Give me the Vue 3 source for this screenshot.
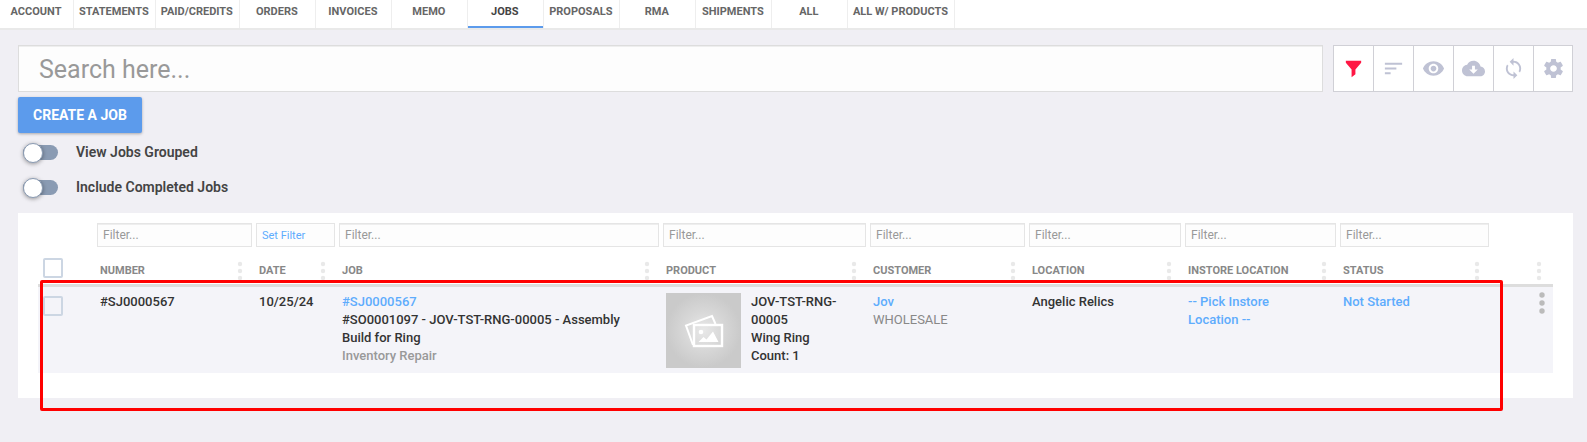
<!-- App.vue -->
<script setup>
import { ref } from 'vue';

const tabs = [
    'Account', 'Statements', 'Paid/Credits', 'Orders', 'Invoices', 'Memo',
    'Jobs', 'Proposals', 'RMA', 'Shipments', 'All', 'All w/ Products'
];
const activeTab = ref('Jobs');

const tools = [
    { name: 'Filter', path: 'M4 4h16v2l-6 7v5l-4 3v-8L4 6z' },
    { name: 'Sort', path: 'M3 18h6v-2H3v2zM3 6v2h18V6H3zm0 7h12v-2H3v2z' },
    { name: 'Visibility', path: 'M12 4.5C7 4.5 2.73 7.61 1 12c1.73 4.39 6 7.5 11 7.5s9.27-3.11 11-7.5c-1.73-4.39-6-7.5-11-7.5zM12 17c-2.76 0-5-2.24-5-5s2.24-5 5-5 5 2.24 5 5-2.24 5-5 5zm0-8c-1.66 0-3 1.34-3 3s1.34 3 3 3 3-1.34 3-3-1.34-3-3-3z' },
    { name: 'Download', path: 'M19.35 10.04C18.67 6.59 15.64 4 12 4 9.11 4 6.6 5.64 5.35 8.04 2.34 8.36 0 10.91 0 14c0 3.31 2.69 6 6 6h13c2.76 0 5-2.24 5-5 0-2.64-2.05-4.78-4.65-4.96zM16.5 13L12 17.5 7.5 13h3V9h3v4h3z' },
    { name: 'Refresh', path: 'M12 4V1L8 5l4 4V6c3.31 0 6 2.69 6 6 0 1.01-.25 1.97-.7 2.8l1.46 1.46C19.54 15.03 20 13.57 20 12c0-4.42-3.58-8-8-8zm0 14c-3.31 0-6-2.69-6-6 0-1.01.25-1.97.7-2.8L5.24 7.74C4.46 8.97 4 10.43 4 12c0 4.42 3.58 8 8 8v3l4-4-4-4v3z' },
    { name: 'Settings', path: 'M19.43 12.98c.04-.32.07-.64.07-.98s-.03-.66-.07-.98l2.11-1.65c.19-.15.24-.42.12-.64l-2-3.46c-.12-.22-.39-.3-.61-.22l-2.49 1c-.52-.4-1.08-.73-1.69-.98l-.38-2.65C14.46 2.18 14.25 2 14 2h-4c-.25 0-.46.18-.49.42l-.38 2.65c-.61.25-1.17.59-1.69.98l-2.49-1c-.23-.09-.49 0-.61.22l-2 3.46c-.13.22-.07.49.12.64l2.11 1.65c-.04.32-.07.65-.07.98s.03.66.07.98l-2.11 1.65c-.19.15-.24.42-.12.64l2 3.46c.12.22.39.3.61.22l2.49-1c.52.4 1.08.73 1.69.98l.38 2.65c.03.24.24.42.49.42h4c.25 0 .46-.18.49-.42l.38-2.65c.61-.25 1.17-.59 1.69-.98l2.49 1c.23.09.49 0 .61-.22l2-3.46c.12-.22.07-.49-.12-.64l-2.11-1.65zM12 15.5c-1.93 0-3.5-1.57-3.5-3.5s1.57-3.5 3.5-3.5 3.5 1.57 3.5 3.5-1.57 3.5-3.5 3.5z' }
];

const columns = [
    { key: 'number', label: 'Number' },
    { key: 'date', label: 'Date' },
    { key: 'job', label: 'Job' },
    { key: 'product', label: 'Product' },
    { key: 'customer', label: 'Customer' },
    { key: 'location', label: 'Location' },
    { key: 'instore', label: 'Instore Location' },
    { key: 'status', label: 'Status' }
];

const search = ref('');
const grouped = ref(false);
const completed = ref(false);
const filters = ref({});
const allSelected = ref(false);

const jobs = ref([
    {
        number: '#SJ0000567',
        date: '10/25/24',
        title: '#SO0001097 - JOV-TST-RNG-00005 - Assembly Build for Ring',
        type: 'Inventory Repair',
        sku: 'JOV-TST-RNG-00005',
        product: 'Wing Ring',
        count: 1,
        customer: 'Jov',
        customerType: 'WHOLESALE',
        location: 'Angelic Relics',
        instore: '-- Pick Instore Location --',
        status: 'Not Started',
        selected: false
    }
]);

function toggleAll() {
    jobs.value.forEach((job) => {
        job.selected = allSelected.value;
    });
}
</script>

<template>
    <div class="page">
        <nav class="tabs">
            <a v-for="tab in tabs" :key="tab" href="#" class="tab" :class="{ active: tab === activeTab }"
                @click.prevent="activeTab = tab">{{ tab }}</a>
        </nav>

        <main class="content">
            <div class="search-row">
                <input v-model="search" class="search" type="text" placeholder="Search here..." aria-label="Search">
                <div class="tools">
                    <button v-for="tool in tools" :key="tool.name" type="button" class="tool"
                        :class="{ active: tool.name === 'Filter' }" :aria-label="tool.name">
                        <svg viewBox="0 0 24 24"><path fill-rule="evenodd" :d="tool.path" /></svg>
                    </button>
                </div>
            </div>

            <button type="button" class="create">Create a job</button>

            <div class="switches">
                <label class="switch-row">
                    <input v-model="grouped" class="switch" type="checkbox">
                    <span>View Jobs Grouped</span>
                </label>
                <label class="switch-row">
                    <input v-model="completed" class="switch" type="checkbox">
                    <span>Include Completed Jobs</span>
                </label>
            </div>

            <section class="card">
                <table class="grid">
                    <colgroup>
                        <col class="col-check">
                        <col v-for="col in columns" :key="col.key" :class="'col-' + col.key">
                        <col class="col-menu">
                    </colgroup>
                    <thead>
                        <tr class="filter-row">
                            <td></td>
                            <td v-for="col in columns" :key="col.key">
                                <button v-if="col.key === 'date'" type="button" class="filter set-filter">Set Filter</button>
                                <input v-else v-model="filters[col.key]" class="filter" type="text"
                                    placeholder="Filter..." :aria-label="'Filter ' + col.label">
                            </td>
                            <td></td>
                        </tr>
                        <tr class="head-row">
                            <th class="check-cell">
                                <input v-model="allSelected" class="check" type="checkbox" aria-label="Select all"
                                    @change="toggleAll">
                            </th>
                            <th v-for="col in columns" :key="col.key">
                                <div class="head-cell">
                                    <span>{{ col.label }}</span>
                                    <svg class="dots" viewBox="0 0 6 20">
                                        <circle cx="3" cy="3" r="2.2" /><circle cx="3" cy="10" r="2.2" /><circle cx="3" cy="17" r="2.2" />
                                    </svg>
                                </div>
                            </th>
                            <th>
                                <div class="head-cell">
                                    <span></span>
                                    <svg class="dots" viewBox="0 0 6 20">
                                        <circle cx="3" cy="3" r="2.2" /><circle cx="3" cy="10" r="2.2" /><circle cx="3" cy="17" r="2.2" />
                                    </svg>
                                </div>
                            </th>
                        </tr>
                    </thead>
                    <tbody>
                        <tr v-for="job in jobs" :key="job.number">
                            <td class="check-cell">
                                <input v-model="job.selected" class="check" type="checkbox"
                                    :aria-label="'Select ' + job.number">
                            </td>
                            <td>{{ job.number }}</td>
                            <td>{{ job.date }}</td>
                            <td class="job">
                                <a href="#">{{ job.number }}</a>
                                <div>{{ job.title }}</div>
                                <div class="muted">{{ job.type }}</div>
                            </td>
                            <td>
                                <div class="product">
                                    <div class="thumb">
                                        <svg viewBox="0 0 40 34">
                                            <path d="M9 31L2 11.500 28 2l3.500 8" fill="none" stroke="#fff" stroke-width="2" />
                                            <rect x="10" y="11" width="28" height="21" fill="none" stroke="#fff" stroke-width="2.4" />
                                            <circle cx="17" cy="18" r="2.3" fill="#fff" />
                                            <path d="M14.500 28l5-5 3 2.500 6.500-8 5.500 10.500z" fill="#fff" />
                                        </svg>
                                    </div>
                                    <div>
                                        <div>{{ job.sku }}</div>
                                        <div>{{ job.product }}</div>
                                        <div>Count: {{ job.count }}</div>
                                    </div>
                                </div>
                            </td>
                            <td>
                                <a href="#">{{ job.customer }}</a>
                                <div class="group">{{ job.customerType }}</div>
                            </td>
                            <td>{{ job.location }}</td>
                            <td><a href="#">{{ job.instore }}</a></td>
                            <td><a href="#">{{ job.status }}</a></td>
                            <td class="menu-cell">
                                <button type="button" class="menu" aria-label="Row menu">
                                    <svg viewBox="0 0 6 22">
                                        <circle cx="3" cy="3" r="2.7" /><circle cx="3" cy="11" r="2.7" /><circle cx="3" cy="19" r="2.7" />
                                    </svg>
                                </button>
                            </td>
                        </tr>
                    </tbody>
                </table>
                <div class="highlight"></div>
            </section>
        </main>
    </div>
</template>

<style>
body {
    margin: 0;
    background: #f0eff4;
}
</style>

<style scoped>
.page {
    min-height: 100vh;
    font-family: Roboto, "Liberation Sans", sans-serif;
    font-size: 13px;
    font-weight: 500;
    line-height: 18px;
    color: #333;
}

.page *,
.page *::before {
    box-sizing: border-box;
}

button,
input {
    margin: 0;
    font-family: inherit;
}

a {
    color: #5eacfd;
    text-decoration: none;
}

.tabs {
    display: flex;
    height: 30px;
    background: #fff;
    border-bottom: 2px solid #e9e9e9;
}

.tab {
    display: flex;
    justify-content: center;
    min-width: 76px;
    padding: 3px 6px 0 5px;
    border-right: 1px solid #eee;
    font-size: 11px;
    line-height: 18px;
    font-weight: 700;
    text-transform: uppercase;
    white-space: nowrap;
    color: #666;
}

.tab:first-child {
    min-width: 74px;
}

.tab.active {
    color: #444;
    box-shadow: inset 0 -2px #5c9bec;
}

.content {
    padding: 15px 14px 0 18px;
}

.search-row {
    display: flex;
    gap: 10px;
    margin-bottom: 5px;
}

.search {
    flex: 1;
    min-width: 0;
    height: 47px;
    padding: 2px 20px 0;
    border: 1px solid #ddd;
    border-radius: 0;
    background: #fdfdfd;
    box-shadow: inset 0 1px #eee;
    font-size: 25px;
    color: #444;
    outline: none;
}

.search::placeholder,
.filter::placeholder {
    color: #999;
    opacity: 1;
}

.tools {
    display: flex;
    border: 1px solid #d0d0d6;
    background: #fff;
}

.tool {
    display: flex;
    align-items: center;
    justify-content: center;
    width: 40px;
    padding: 0;
    border: 0;
    border-right: 1px solid #d0d0d6;
    background: none;
    cursor: pointer;
}

.tool:last-child {
    width: 38px;
    border-right: 0;
}

.tool svg {
    width: 23px;
    height: 23px;
    fill: #bfc2d4;
}

.tool.active svg {
    fill: #ff1744;
}

.create {
    display: block;
    height: 36px;
    padding: 0 15px;
    border: 0;
    border-radius: 2px;
    background: #5c9bec;
    box-shadow: 0 1px 3px rgba(0, 0, 0, 0.3);
    font-size: 14px;
    font-weight: 700;
    text-transform: uppercase;
    color: #fff;
    cursor: pointer;
}

.switches {
    display: flex;
    flex-direction: column;
    align-items: flex-start;
    padding: 2px 5px 8px;
}

.switch-row {
    display: flex;
    align-items: center;
    gap: 18px;
    height: 35px;
    font-size: 14px;
    font-weight: 600;
    color: #444;
    cursor: pointer;
}

.switch-row span {
    padding-bottom: 1px;
}

.switch {
    display: flex;
    align-items: center;
    appearance: none;
    width: 35px;
    height: 15px;
    border-radius: 8px;
    background: #8a9bb3;
    cursor: pointer;
}

.switch::before {
    content: "";
    width: 20px;
    height: 20px;
    border: 1px solid #8a9bb3;
    border-radius: 50%;
    background: #fff;
    box-shadow: 0 1px 4px rgba(0, 0, 0, 0.4);
}

.switch:checked {
    justify-content: flex-end;
    background: #5c9bec;
}

.card {
    position: relative;
    padding: 10px 20px 25px;
    background: #fff;
}

.grid {
    width: 100%;
    table-layout: fixed;
    border-collapse: separate;
    border-spacing: 0;
}

.col-check { width: 57px; }
.col-number { width: 159px; }
.col-date { width: 83px; }
.col-product { width: 207px; }
.col-customer { width: 159px; }
.col-location { width: 156px; }
.col-instore { width: 155px; }
.col-status { width: 153px; }
.col-menu { width: 62px; }

.filter-row td {
    padding: 0 2px;
    vertical-align: top;
}

.filter {
    display: block;
    width: 100%;
    height: 24px;
    padding: 0 5px;
    border: 1px solid #e5e5e5;
    border-radius: 0;
    background: #fdfdfd;
    box-shadow: inset 0 1px #eee;
    font-size: 12px;
    outline: none;
}

.set-filter {
    box-shadow: none;
    font-size: 11px;
    text-align: left;
    color: #5eacfd;
    cursor: pointer;
}

.head-row th {
    height: 40px;
    padding: 0;
    border-bottom: 3px solid #ddd;
    text-align: left;
    vertical-align: top;
}

.head-cell {
    display: flex;
    align-items: center;
    justify-content: space-between;
    padding: 14px 11px 0 5px;
    font-size: 11px;
    font-weight: 700;
    text-transform: uppercase;
    color: #888;
}

.dots {
    width: 6px;
    height: 20px;
    fill: #e9e9e9;
}

tbody td {
    padding: 6px 20px 5px 5px;
    background: #f4f4f9;
    vertical-align: top;
}

.head-row .check-cell {
    padding: 11px 5px 0;
}

tbody .check-cell {
    padding-top: 9px;
}

.check {
    display: block;
    appearance: none;
    width: 20px;
    height: 20px;
    border: 2px solid #ccd6e3;
    border-radius: 2px;
}

.check:checked {
    background: #5c9bec;
}

tbody .job {
    padding-right: 40px;
}

.muted {
    color: #999;
}

.group {
    font-weight: 400;
    color: #888;
}

.product {
    display: flex;
    gap: 10px;
}

.thumb {
    display: flex;
    flex: none;
    align-items: center;
    justify-content: center;
    width: 75px;
    height: 75px;
    background: radial-gradient(circle, #e8e8e8 0%, #d8d8d8 35%, #cacaca 70%);
}

.thumb svg {
    width: 40px;
    height: 34px;
}

tbody .menu-cell {
    padding: 5px 8px 5px 5px;
}

.menu {
    display: block;
    width: 6px;
    margin-left: auto;
    padding: 0;
    border: 0;
    background: none;
    cursor: pointer;
}

.menu svg {
    display: block;
    width: 6px;
    height: 22px;
    fill: #bbb;
}

/* marker frame over the job rows */
.highlight {
    position: absolute;
    top: 67px;
    right: 70px;
    bottom: -13px;
    left: 22px;
    border: 3px solid #f00;
    border-radius: 2px;
    pointer-events: none;
}
</style>
